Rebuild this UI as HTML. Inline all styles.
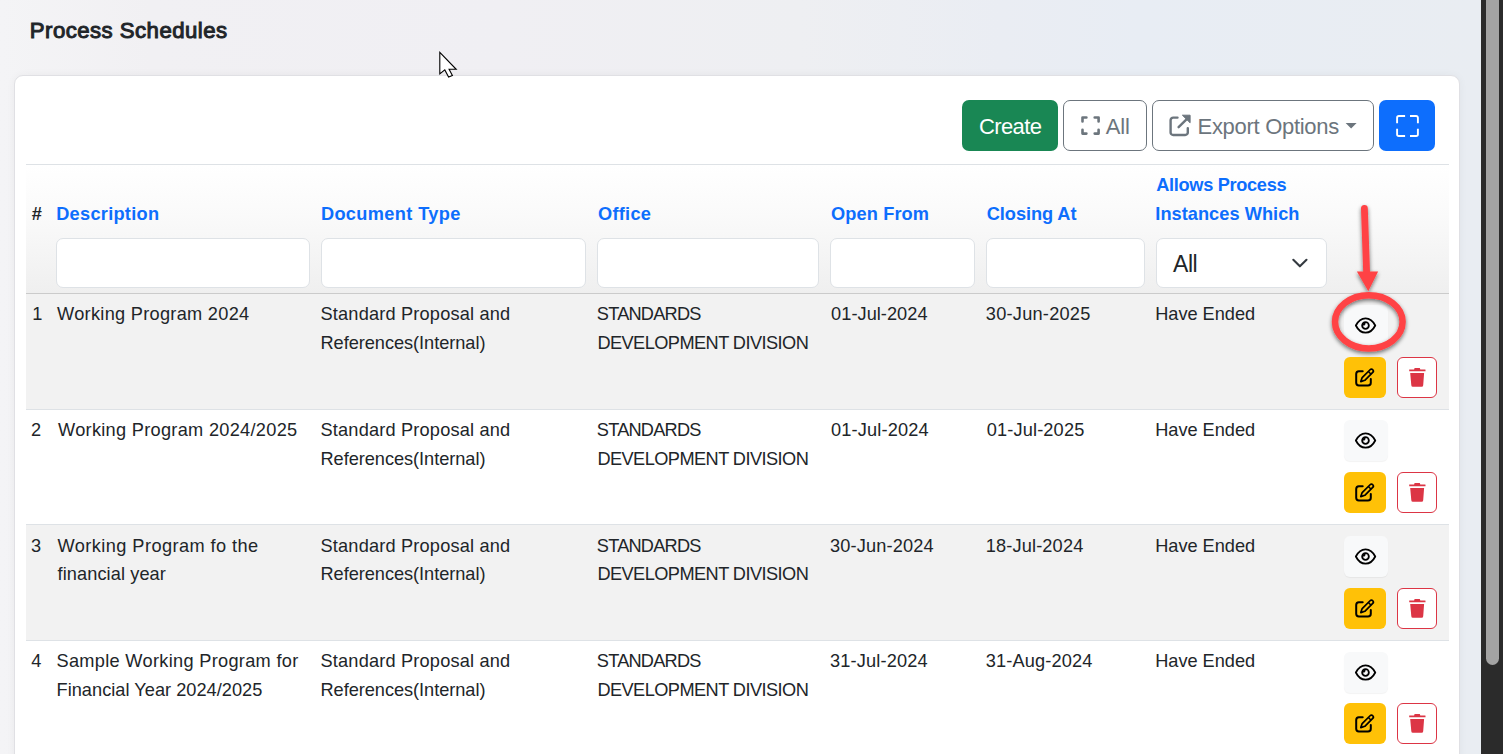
<!DOCTYPE html>
<html><head><meta charset="utf-8">
<style>
html,body{margin:0;padding:0;}
body{width:1503px;height:754px;overflow:hidden;position:relative;font-family:"Liberation Sans",sans-serif;
 background:linear-gradient(90deg,#f4f4f6 0px,#f1f0f3 150px,#f0eff3 500px,#eeeff2 800px,#eaedf3 1000px,#e8edf4 1140px,#e9edf2 1480px);}
.t{position:absolute;white-space:nowrap;line-height:40px;font-family:"Liberation Sans",sans-serif;}
.abs{position:absolute;}
.card{position:absolute;left:14px;top:75px;width:1444px;height:720px;background:#fff;border:1px solid #e0e0e4;border-radius:9px;box-shadow:0 0 8px rgba(0,0,0,.045);}
.btn{position:absolute;top:100px;height:51px;box-sizing:border-box;border-radius:7px;}
.inp{position:absolute;top:238px;height:50px;box-sizing:border-box;background:#fff;border:1px solid #dee2e6;border-radius:7px;}
.rowbg{position:absolute;left:26px;width:1423px;}
.ab{position:absolute;box-sizing:border-box;border-radius:6px;}
.sb{position:absolute;left:1481px;top:0;width:22px;height:754px;background:#2b2b2b;}
</style></head>
<body>
<div class="card"></div>

<!-- toolbar buttons -->
<div class="btn" style="left:962px;width:96px;background:#198754;"></div>
<div class="btn" style="left:1063px;width:84px;border:1px solid #6c757d;background:#fff;"></div>
<div class="btn" style="left:1152px;width:222px;border:1px solid #6c757d;background:#fff;"></div>
<div class="btn" style="left:1379px;width:56px;background:#0d6efd;"></div>

<!-- All icon -->
<svg class="abs" style="left:1076px;top:110px" width="30" height="30" viewBox="0 0 30 30">
 <g fill="none" stroke="#6c757d" stroke-width="2.6" stroke-linecap="round" stroke-linejoin="round">
  <path d="M6.5 11.4V7.5H10.4"/><path d="M18.7 7.5H22.6V11.4"/><path d="M6.5 19.7V23.6H10.4"/><path d="M18.7 23.6H22.6V19.7"/>
 </g></svg>
<!-- external link icon -->
<svg class="abs" style="left:1164px;top:110px" width="32" height="32" viewBox="0 0 32 32">
 <g fill="none" stroke="#6c757d" stroke-width="2.4" stroke-linecap="round" stroke-linejoin="round">
  <path d="M13.5 7.6H9.2A2.6 2.6 0 0 0 6.6 10.2V22.4A2.6 2.6 0 0 0 9.2 25H21.2A2.6 2.6 0 0 0 23.8 22.4V18.2"/>
  <path d="M14.6 17.2L23 8.8"/>
 </g>
 <path d="M18.4 5.2H26.1V12.8Z" fill="#6c757d" stroke="#6c757d" stroke-width="1" stroke-linejoin="round"/>
</svg>
<!-- caret -->
<svg class="abs" style="left:1345px;top:122px" width="13" height="8" viewBox="0 0 13 8"><path d="M0.6 1H11.6L6.1 6.6Z" fill="#6c757d"/></svg>
<!-- blue fullscreen icon -->
<svg class="abs" style="left:1390px;top:110px" width="34" height="32" viewBox="0 0 34 32">
 <g fill="none" stroke="#fff" stroke-width="1.9" stroke-linejoin="round">
  <path d="M7.1 13.2V7.8A1.8 1.8 0 0 1 8.9 6H15.1"/><path d="M20 6H26.1A1.8 1.8 0 0 1 27.9 7.8V13.2"/>
  <path d="M7.1 18.7V24.2A1.8 1.8 0 0 0 8.9 26H15.1"/><path d="M20 26H26.1A1.8 1.8 0 0 0 27.9 24.2V18.7"/>
 </g></svg>

<!-- table top border + header -->
<div class="abs" style="left:26px;top:164px;width:1423px;height:1px;background:#dee2e6"></div>
<div class="abs" style="left:26px;top:165px;width:1423px;height:128px;background:linear-gradient(180deg,#ffffff 0%,#fafafa 40%,#efefef 100%)"></div>
<div class="abs" style="left:26px;top:293px;width:1423px;height:1px;background:#cbcbcb"></div>

<!-- filter inputs -->
<div class="inp" style="left:56px;width:254px"></div>
<div class="inp" style="left:321px;width:265px"></div>
<div class="inp" style="left:597px;width:222px"></div>
<div class="inp" style="left:830px;width:145px"></div>
<div class="inp" style="left:986px;width:159px"></div>
<div class="inp" style="left:1156px;width:171px"></div>
<svg class="abs" style="left:1290px;top:256px" width="20" height="14" viewBox="0 0 20 14"><path d="M3.3 3.8L9.9 10.3L16.5 3.8" fill="none" stroke="#343a40" stroke-width="2.1" stroke-linecap="round" stroke-linejoin="round"/></svg>

<!-- rows -->
<div class="rowbg" style="top:294px;height:115px;background:#f2f2f2"></div>
<div class="rowbg" style="top:409px;height:1px;background:#dee2e6"></div>
<div class="rowbg" style="top:410px;height:114px;background:#fff"></div>
<div class="rowbg" style="top:524px;height:1px;background:#dee2e6"></div>
<div class="rowbg" style="top:525px;height:115px;background:#f2f2f2"></div>
<div class="rowbg" style="top:640px;height:1px;background:#dee2e6"></div>

<!-- action buttons -->
<div class="ab" style="left:1344px;top:305px;width:44px;height:41px;background:#f8f9fa;box-shadow:0 1px 1px rgba(0,0,0,.05)"></div>
<svg class="abs" style="left:1344px;top:305px" width="44" height="41" viewBox="0 0 44 41">
 <g transform="translate(0 0.5)"><path d="M11.85 20C13.9 15.9 17 12.8 21.55 12.8C26.1 12.8 29.2 15.9 31.25 20C29.2 24.1 26.1 27.2 21.55 27.2C17 27.2 13.9 24.1 11.85 20Z" fill="none" stroke="#000" stroke-width="1.8" stroke-linejoin="round"/>
 <circle cx="21.5" cy="20" r="3.35" fill="none" stroke="#000" stroke-width="1.8"/>
 <path d="M18.6 20A2.9 2.9 0 0 1 21.5 17.1L21.5 18.73A1.5 1.5 0 0 0 20.6 20Z" fill="#000"/></g>
</svg>
<div class="ab" style="left:1344px;top:357px;width:42px;height:41px;background:#ffc107"></div>
<svg class="abs" style="left:1344px;top:357px" width="42" height="41" viewBox="0 0 42 41">
 <path d="M18.7 14.3H14.9A2.8 2.8 0 0 0 12.2 17.1V25.8A2.8 2.8 0 0 0 14.9 28.6H24A2.8 2.8 0 0 0 26.8 25.8V22.1" fill="none" stroke="#000" stroke-width="2" stroke-linecap="round"/>
 <g transform="translate(0 0.8)"><path d="M16.8 23.8L18.17 19.78L26.07 11.94A1.9 1.9 0 0 1 28.73 14.66L20.83 22.5Z" fill="none" stroke="#000" stroke-width="1.7" stroke-linejoin="round"/>
 <path d="M24.41 13.7L27.07 16.42" stroke="#000" stroke-width="1.5"/></g>
</svg>
<div class="ab" style="left:1397px;top:357px;width:40px;height:41px;background:#fff;border:1px solid #dc3545"></div>
<svg class="abs" style="left:1397px;top:357px" width="40" height="41" viewBox="0 0 40 41">
 <path d="M12.2 12.6Q12.2 12.4 12.5 12.4H17.1L17.6 11H22.8L23.3 12.4H28.2Q28.5 12.4 28.5 12.7V14.3H12.2Z" fill="#dc3545"/>
 <path d="M13.2 15.9H27.1L26.2 28.2A1.6 1.6 0 0 1 24.6 29.7H15.9A1.6 1.6 0 0 1 14.3 28.2Z" fill="#dc3545"/>
</svg>
<div class="ab" style="left:1344px;top:420px;width:44px;height:41px;background:#f8f9fa;box-shadow:0 1px 1px rgba(0,0,0,.05)"></div>
<svg class="abs" style="left:1344px;top:420px" width="44" height="41" viewBox="0 0 44 41">
 <g transform="translate(0 0.5)"><path d="M11.85 20C13.9 15.9 17 12.8 21.55 12.8C26.1 12.8 29.2 15.9 31.25 20C29.2 24.1 26.1 27.2 21.55 27.2C17 27.2 13.9 24.1 11.85 20Z" fill="none" stroke="#000" stroke-width="1.8" stroke-linejoin="round"/>
 <circle cx="21.5" cy="20" r="3.35" fill="none" stroke="#000" stroke-width="1.8"/>
 <path d="M18.6 20A2.9 2.9 0 0 1 21.5 17.1L21.5 18.73A1.5 1.5 0 0 0 20.6 20Z" fill="#000"/></g>
</svg>
<div class="ab" style="left:1344px;top:472px;width:42px;height:41px;background:#ffc107"></div>
<svg class="abs" style="left:1344px;top:472px" width="42" height="41" viewBox="0 0 42 41">
 <path d="M18.7 14.3H14.9A2.8 2.8 0 0 0 12.2 17.1V25.8A2.8 2.8 0 0 0 14.9 28.6H24A2.8 2.8 0 0 0 26.8 25.8V22.1" fill="none" stroke="#000" stroke-width="2" stroke-linecap="round"/>
 <g transform="translate(0 0.8)"><path d="M16.8 23.8L18.17 19.78L26.07 11.94A1.9 1.9 0 0 1 28.73 14.66L20.83 22.5Z" fill="none" stroke="#000" stroke-width="1.7" stroke-linejoin="round"/>
 <path d="M24.41 13.7L27.07 16.42" stroke="#000" stroke-width="1.5"/></g>
</svg>
<div class="ab" style="left:1397px;top:472px;width:40px;height:41px;background:#fff;border:1px solid #dc3545"></div>
<svg class="abs" style="left:1397px;top:472px" width="40" height="41" viewBox="0 0 40 41">
 <path d="M12.2 12.6Q12.2 12.4 12.5 12.4H17.1L17.6 11H22.8L23.3 12.4H28.2Q28.5 12.4 28.5 12.7V14.3H12.2Z" fill="#dc3545"/>
 <path d="M13.2 15.9H27.1L26.2 28.2A1.6 1.6 0 0 1 24.6 29.7H15.9A1.6 1.6 0 0 1 14.3 28.2Z" fill="#dc3545"/>
</svg>
<div class="ab" style="left:1344px;top:536px;width:44px;height:41px;background:#f8f9fa;box-shadow:0 1px 1px rgba(0,0,0,.05)"></div>
<svg class="abs" style="left:1344px;top:536px" width="44" height="41" viewBox="0 0 44 41">
 <g transform="translate(0 0.5)"><path d="M11.85 20C13.9 15.9 17 12.8 21.55 12.8C26.1 12.8 29.2 15.9 31.25 20C29.2 24.1 26.1 27.2 21.55 27.2C17 27.2 13.9 24.1 11.85 20Z" fill="none" stroke="#000" stroke-width="1.8" stroke-linejoin="round"/>
 <circle cx="21.5" cy="20" r="3.35" fill="none" stroke="#000" stroke-width="1.8"/>
 <path d="M18.6 20A2.9 2.9 0 0 1 21.5 17.1L21.5 18.73A1.5 1.5 0 0 0 20.6 20Z" fill="#000"/></g>
</svg>
<div class="ab" style="left:1344px;top:588px;width:42px;height:41px;background:#ffc107"></div>
<svg class="abs" style="left:1344px;top:588px" width="42" height="41" viewBox="0 0 42 41">
 <path d="M18.7 14.3H14.9A2.8 2.8 0 0 0 12.2 17.1V25.8A2.8 2.8 0 0 0 14.9 28.6H24A2.8 2.8 0 0 0 26.8 25.8V22.1" fill="none" stroke="#000" stroke-width="2" stroke-linecap="round"/>
 <g transform="translate(0 0.8)"><path d="M16.8 23.8L18.17 19.78L26.07 11.94A1.9 1.9 0 0 1 28.73 14.66L20.83 22.5Z" fill="none" stroke="#000" stroke-width="1.7" stroke-linejoin="round"/>
 <path d="M24.41 13.7L27.07 16.42" stroke="#000" stroke-width="1.5"/></g>
</svg>
<div class="ab" style="left:1397px;top:588px;width:40px;height:41px;background:#fff;border:1px solid #dc3545"></div>
<svg class="abs" style="left:1397px;top:588px" width="40" height="41" viewBox="0 0 40 41">
 <path d="M12.2 12.6Q12.2 12.4 12.5 12.4H17.1L17.6 11H22.8L23.3 12.4H28.2Q28.5 12.4 28.5 12.7V14.3H12.2Z" fill="#dc3545"/>
 <path d="M13.2 15.9H27.1L26.2 28.2A1.6 1.6 0 0 1 24.6 29.7H15.9A1.6 1.6 0 0 1 14.3 28.2Z" fill="#dc3545"/>
</svg>
<div class="ab" style="left:1344px;top:652px;width:44px;height:41px;background:#f8f9fa;box-shadow:0 1px 1px rgba(0,0,0,.05)"></div>
<svg class="abs" style="left:1344px;top:652px" width="44" height="41" viewBox="0 0 44 41">
 <g transform="translate(0 0.5)"><path d="M11.85 20C13.9 15.9 17 12.8 21.55 12.8C26.1 12.8 29.2 15.9 31.25 20C29.2 24.1 26.1 27.2 21.55 27.2C17 27.2 13.9 24.1 11.85 20Z" fill="none" stroke="#000" stroke-width="1.8" stroke-linejoin="round"/>
 <circle cx="21.5" cy="20" r="3.35" fill="none" stroke="#000" stroke-width="1.8"/>
 <path d="M18.6 20A2.9 2.9 0 0 1 21.5 17.1L21.5 18.73A1.5 1.5 0 0 0 20.6 20Z" fill="#000"/></g>
</svg>
<div class="ab" style="left:1344px;top:703px;width:42px;height:41px;background:#ffc107"></div>
<svg class="abs" style="left:1344px;top:703px" width="42" height="41" viewBox="0 0 42 41">
 <path d="M18.7 14.3H14.9A2.8 2.8 0 0 0 12.2 17.1V25.8A2.8 2.8 0 0 0 14.9 28.6H24A2.8 2.8 0 0 0 26.8 25.8V22.1" fill="none" stroke="#000" stroke-width="2" stroke-linecap="round"/>
 <g transform="translate(0 0.8)"><path d="M16.8 23.8L18.17 19.78L26.07 11.94A1.9 1.9 0 0 1 28.73 14.66L20.83 22.5Z" fill="none" stroke="#000" stroke-width="1.7" stroke-linejoin="round"/>
 <path d="M24.41 13.7L27.07 16.42" stroke="#000" stroke-width="1.5"/></g>
</svg>
<div class="ab" style="left:1397px;top:703px;width:40px;height:41px;background:#fff;border:1px solid #dc3545"></div>
<svg class="abs" style="left:1397px;top:703px" width="40" height="41" viewBox="0 0 40 41">
 <path d="M12.2 12.6Q12.2 12.4 12.5 12.4H17.1L17.6 11H22.8L23.3 12.4H28.2Q28.5 12.4 28.5 12.7V14.3H12.2Z" fill="#dc3545"/>
 <path d="M13.2 15.9H27.1L26.2 28.2A1.6 1.6 0 0 1 24.6 29.7H15.9A1.6 1.6 0 0 1 14.3 28.2Z" fill="#dc3545"/>
</svg>

<div class="t" style="left:29.8px;top:11.3px;font-size:22.2px;font-weight:400;letter-spacing:0.462px;color:#212529;-webkit-text-stroke:1.0px #212529">Process Schedules</div>
<div class="t" style="left:979.1px;top:107.1px;font-size:22px;font-weight:400;letter-spacing:-0.64px;color:#ffffff">Create</div>
<div class="t" style="left:1105.8px;top:107.1px;font-size:22px;font-weight:400;letter-spacing:-0.2px;color:#6c757d">All</div>
<div class="t" style="left:1197.5px;top:107.1px;font-size:22px;font-weight:400;letter-spacing:-0.292px;color:#6c757d">Export Options</div>
<div class="t" style="left:31.7px;top:194.2px;font-size:18.2px;font-weight:700;letter-spacing:0.0px;color:#212529">#</div>
<div class="t" style="left:56.2px;top:194.2px;font-size:18.2px;font-weight:700;letter-spacing:0.28px;color:#0d6efd">Description</div>
<div class="t" style="left:320.9px;top:194.3px;font-size:18.2px;font-weight:700;letter-spacing:0.367px;color:#0d6efd">Document Type</div>
<div class="t" style="left:598px;top:194.3px;font-size:18.2px;font-weight:700;letter-spacing:0.28px;color:#0d6efd">Office</div>
<div class="t" style="left:831px;top:194.3px;font-size:18.2px;font-weight:700;letter-spacing:0.125px;color:#0d6efd">Open From</div>
<div class="t" style="left:986.8px;top:194.3px;font-size:18.2px;font-weight:700;letter-spacing:-0.067px;color:#0d6efd">Closing At</div>
<div class="t" style="left:1156.3px;top:165.3px;font-size:18.2px;font-weight:700;letter-spacing:-0.323px;color:#0d6efd">Allows Process</div>
<div class="t" style="left:1155.3px;top:194.1px;font-size:18.2px;font-weight:700;letter-spacing:0.043px;color:#0d6efd">Instances Which</div>
<div class="t" style="left:1173.1px;top:244.1px;font-size:23px;font-weight:400;letter-spacing:-0.5px;color:#212529">All</div>
<div class="t" style="left:32.2px;top:294px;font-size:18.2px;font-weight:400;letter-spacing:0.0px;color:#212529">1</div>
<div class="t" style="left:57.1px;top:294px;font-size:18.2px;font-weight:400;letter-spacing:0.284px;color:#212529">Working Program 2024</div>
<div class="t" style="left:320.5px;top:294px;font-size:18.2px;font-weight:400;letter-spacing:0.18px;color:#212529">Standard Proposal and</div>
<div class="t" style="left:320.5px;top:322.8px;font-size:18.2px;font-weight:400;letter-spacing:-0.042px;color:#212529">References(Internal)</div>
<div class="t" style="left:596.8px;top:294px;font-size:18.2px;font-weight:400;letter-spacing:-0.775px;color:#212529">STANDARDS</div>
<div class="t" style="left:597.4px;top:322.8px;font-size:18.2px;font-weight:400;letter-spacing:-0.558px;color:#212529">DEVELOPMENT DIVISION</div>
<div class="t" style="left:831.1px;top:294px;font-size:18.2px;font-weight:400;letter-spacing:0.04px;color:#212529">01-Jul-2024</div>
<div class="t" style="left:985.8px;top:294px;font-size:18.2px;font-weight:400;letter-spacing:0.24px;color:#212529">30-Jun-2025</div>
<div class="t" style="left:1155.2px;top:294px;font-size:18.2px;font-weight:400;letter-spacing:-0.022px;color:#212529">Have Ended</div>
<div class="t" style="left:31px;top:409.8px;font-size:18.2px;font-weight:400;letter-spacing:0.0px;color:#212529">2</div>
<div class="t" style="left:58px;top:409.8px;font-size:18.2px;font-weight:400;letter-spacing:0.292px;color:#212529">Working Program 2024/2025</div>
<div class="t" style="left:320.5px;top:409.8px;font-size:18.2px;font-weight:400;letter-spacing:0.18px;color:#212529">Standard Proposal and</div>
<div class="t" style="left:320.5px;top:438.5px;font-size:18.2px;font-weight:400;letter-spacing:-0.042px;color:#212529">References(Internal)</div>
<div class="t" style="left:596.8px;top:409.8px;font-size:18.2px;font-weight:400;letter-spacing:-0.775px;color:#212529">STANDARDS</div>
<div class="t" style="left:597.4px;top:438.5px;font-size:18.2px;font-weight:400;letter-spacing:-0.558px;color:#212529">DEVELOPMENT DIVISION</div>
<div class="t" style="left:831.1px;top:409.8px;font-size:18.2px;font-weight:400;letter-spacing:0.14px;color:#212529">01-Jul-2024</div>
<div class="t" style="left:986.8px;top:409.8px;font-size:18.2px;font-weight:400;letter-spacing:0.14px;color:#212529">01-Jul-2025</div>
<div class="t" style="left:1155.2px;top:409.8px;font-size:18.2px;font-weight:400;letter-spacing:-0.022px;color:#212529">Have Ended</div>
<div class="t" style="left:31px;top:526px;font-size:18.2px;font-weight:400;letter-spacing:0.0px;color:#212529">3</div>
<div class="t" style="left:57.5px;top:526px;font-size:18.2px;font-weight:400;letter-spacing:0.429px;color:#212529">Working Program fo the</div>
<div class="t" style="left:57.5px;top:554.2px;font-size:18.2px;font-weight:400;letter-spacing:0.092px;color:#212529">financial year</div>
<div class="t" style="left:320.5px;top:526px;font-size:18.2px;font-weight:400;letter-spacing:0.18px;color:#212529">Standard Proposal and</div>
<div class="t" style="left:320.5px;top:554.2px;font-size:18.2px;font-weight:400;letter-spacing:-0.042px;color:#212529">References(Internal)</div>
<div class="t" style="left:596.8px;top:526px;font-size:18.2px;font-weight:400;letter-spacing:-0.775px;color:#212529">STANDARDS</div>
<div class="t" style="left:597.4px;top:554.2px;font-size:18.2px;font-weight:400;letter-spacing:-0.558px;color:#212529">DEVELOPMENT DIVISION</div>
<div class="t" style="left:830.1px;top:526px;font-size:18.2px;font-weight:400;letter-spacing:0.14px;color:#212529">30-Jun-2024</div>
<div class="t" style="left:985.8px;top:526px;font-size:18.2px;font-weight:400;letter-spacing:0.14px;color:#212529">18-Jul-2024</div>
<div class="t" style="left:1155.2px;top:526px;font-size:18.2px;font-weight:400;letter-spacing:-0.022px;color:#212529">Have Ended</div>
<div class="t" style="left:31.2px;top:640.6px;font-size:18.2px;font-weight:400;letter-spacing:0.0px;color:#212529">4</div>
<div class="t" style="left:56.5px;top:640.6px;font-size:18.2px;font-weight:400;letter-spacing:0.304px;color:#212529">Sample Working Program for</div>
<div class="t" style="left:56.5px;top:669.6px;font-size:18.2px;font-weight:400;letter-spacing:0.026px;color:#212529">Financial Year 2024/2025</div>
<div class="t" style="left:320.5px;top:640.6px;font-size:18.2px;font-weight:400;letter-spacing:0.18px;color:#212529">Standard Proposal and</div>
<div class="t" style="left:320.5px;top:669.6px;font-size:18.2px;font-weight:400;letter-spacing:-0.042px;color:#212529">References(Internal)</div>
<div class="t" style="left:596.8px;top:640.6px;font-size:18.2px;font-weight:400;letter-spacing:-0.775px;color:#212529">STANDARDS</div>
<div class="t" style="left:597.4px;top:669.6px;font-size:18.2px;font-weight:400;letter-spacing:-0.558px;color:#212529">DEVELOPMENT DIVISION</div>
<div class="t" style="left:830.1px;top:640.6px;font-size:18.2px;font-weight:400;letter-spacing:0.14px;color:#212529">31-Jul-2024</div>
<div class="t" style="left:985.8px;top:640.6px;font-size:18.2px;font-weight:400;letter-spacing:0.14px;color:#212529">31-Aug-2024</div>
<div class="t" style="left:1155.2px;top:640.6px;font-size:18.2px;font-weight:400;letter-spacing:-0.022px;color:#212529">Have Ended</div>

<!-- annotation -->
<svg class="abs" style="left:1300px;top:190px;overflow:visible" width="140" height="180" viewBox="0 0 140 180">
 <defs><filter id="sh" x="-30%" y="-30%" width="160%" height="160%"><feGaussianBlur in="SourceAlpha" stdDeviation="2"/><feOffset dx="0" dy="2"/><feComponentTransfer><feFuncA type="linear" slope="0.55"/></feComponentTransfer><feMerge><feMergeNode/><feMergeNode in="SourceGraphic"/></feMerge></filter></defs>
 <g filter="url(#sh)">
  <path d="M64.4 18.4L66.6 82" stroke="#ff4244" stroke-width="6.8" stroke-linecap="round" fill="none"/>
  <path d="M56.9 81.4H78.1L68.3 101.2Z" fill="#ff4244"/>
  <ellipse cx="68.8" cy="131.8" rx="33.8" ry="26.6" fill="none" stroke="#ff4244" stroke-width="6.5"/>
 </g>
</svg>

<!-- cursor -->
<svg class="abs" style="left:436px;top:49px" width="24" height="32" viewBox="0 0 24 32">
 <path d="M3.8 3.4V24.9L8.8 20.9L12.6 28.1L16.4 26.5L13.1 20.3H20.2Z" fill="#fff" stroke="#000" stroke-width="1.1" stroke-linejoin="miter"/>
</svg>

<!-- scrollbar -->
<div class="sb"><div style="position:absolute;left:5px;top:-10px;width:13px;height:675px;background:#a3a3a3;border-radius:7px"></div></div>
</body></html>
